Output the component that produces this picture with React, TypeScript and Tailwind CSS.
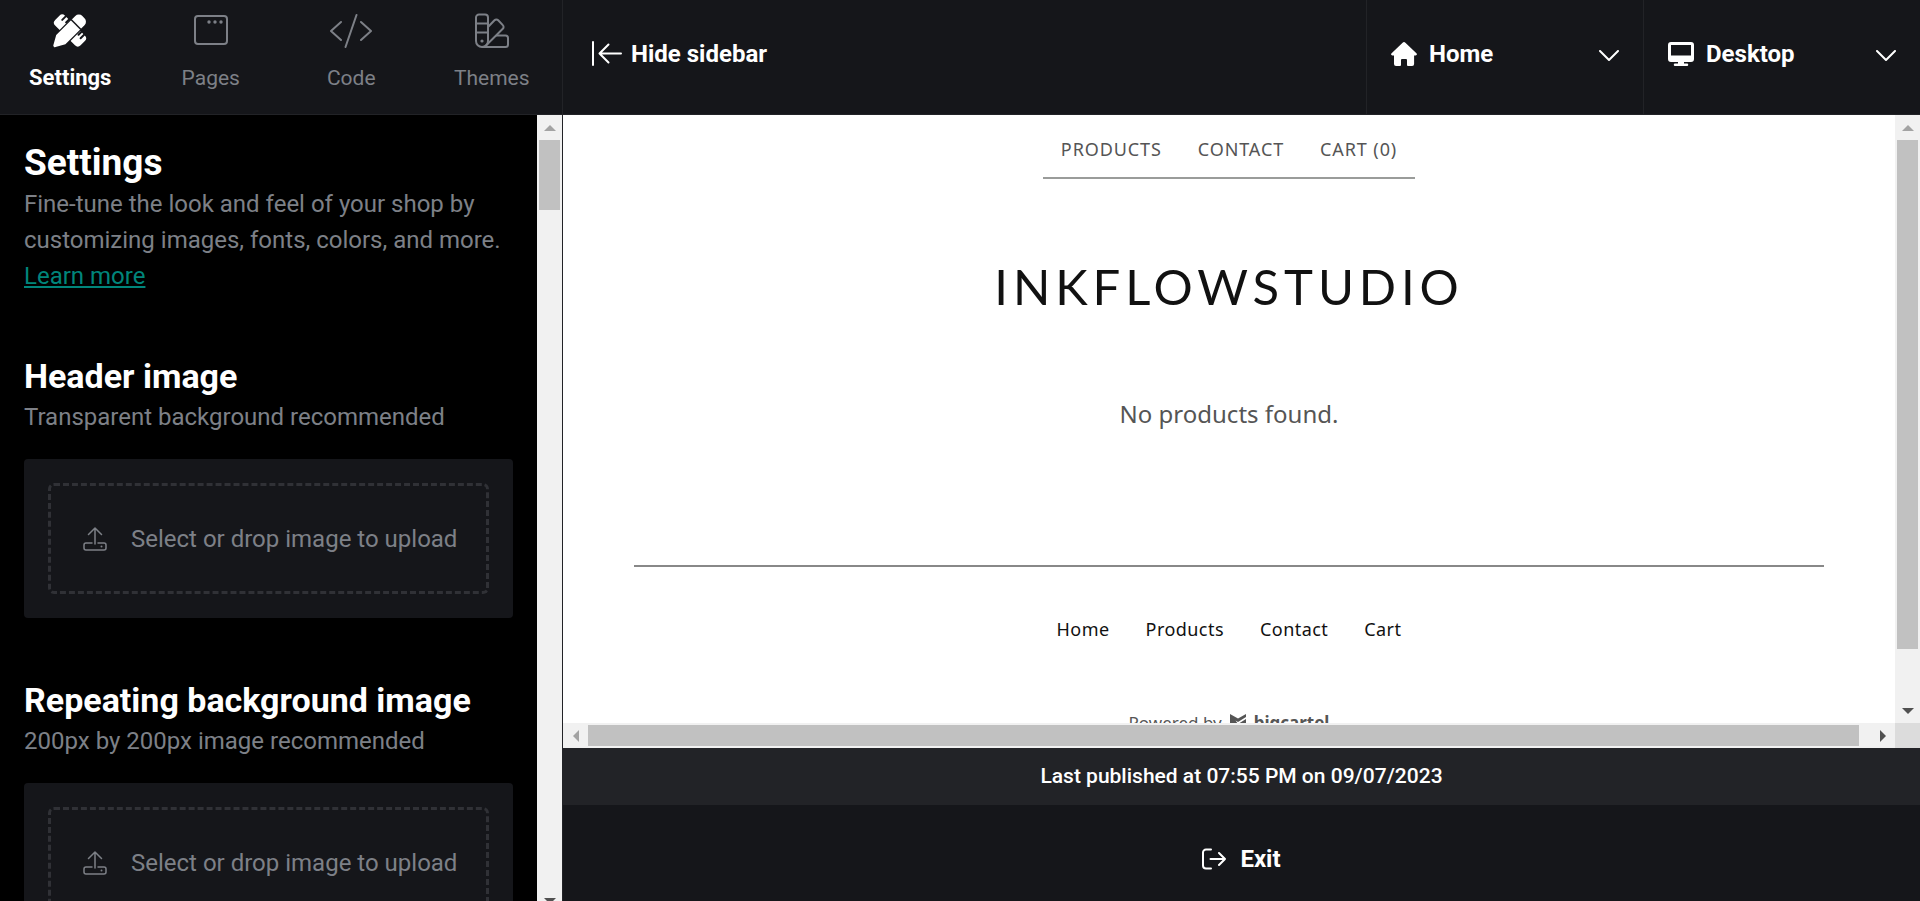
import type { ReactNode } from "react";

const tabs: { name: string; icon: ReactNode }[] = [
  {
    name: "Settings",
    icon: (
      <svg viewBox="0 0 34 36" className="h-9 w-[34px]" fill="currentColor" aria-hidden="true">
        <g transform="translate(17 18.5) rotate(45)">
          <rect x="-18" y="-7" width="36" height="14" rx="4" />
          <path d="M-13 -8v6M-8.500 -8v5M9 -8v5M13 -8v6" stroke="#15161a" strokeWidth="2" strokeLinecap="round" />
        </g>
        <g transform="translate(17 18.500) rotate(-45)">
          <path d="M-22 -1.500-13 -6.500H14a5 5 0 0 1 5 5v3a5 5 0 0 1-5 5H-13l-9-5a1.700 1.700 0 0 1 0-3z" stroke="#15161a" strokeWidth="2.500" paintOrder="stroke" />
          <path d="M8.500 -7V7" stroke="#15161a" strokeWidth="1.500" />
        </g>
      </svg>
    ),
  },
  {
    name: "Pages",
    icon: (
      <svg viewBox="0 0 34 36" className="h-9 w-[34px]" fill="none" stroke="currentColor" strokeWidth="2" aria-hidden="true">
        <rect x="1" y="4" width="32" height="28" rx="3" />
        <g fill="currentColor" stroke="none">
          <circle cx="15" cy="10" r="1.700" />
          <circle cx="21" cy="10" r="1.700" />
          <circle cx="27" cy="10" r="1.700" />
        </g>
      </svg>
    ),
  },
  {
    name: "Code",
    icon: (
      <svg viewBox="0 0 42 36" className="h-9 w-[42px]" fill="none" stroke="currentColor" strokeWidth="2" strokeLinecap="round" strokeLinejoin="round" aria-hidden="true">
        <path d="M11 10 1 19l10 9M31 10l10 9-10 9M26.500 3l-11 32" />
      </svg>
    ),
  },
  {
    name: "Themes",
    icon: (
      <svg viewBox="0 0 34 36" className="h-9 w-[34px]" fill="none" stroke="currentColor" strokeWidth="2" strokeLinejoin="round" aria-hidden="true">
        <path d="M4 2.500h6a3 3 0 0 1 3 3V29a6 6 0 0 1-12 0V5.500a3 3 0 0 1 3-3zM1 11.500h12M1 20.500h12" />
        <path d="m13 15 6.500-6.800a2.600 2.600 0 0 1 3.700 0l4.600 4.900a2.600 2.600 0 0 1 0 3.700L11 33.500" />
        <path d="M7 35h23.500a2.500 2.500 0 0 0 2.500-2.500V26a2.500 2.500 0 0 0-2.500-2.500H21" />
        <circle cx="7" cy="29" r="1.600" fill="currentColor" stroke="none" />
      </svg>
    ),
  },
];

function Triangle({ d }: { d: string }) {
  return (
    <svg viewBox="0 0 12 12" className="size-3" fill="currentColor" aria-hidden="true">
      <path d={d} />
    </svg>
  );
}

const up = "M6 3 12 9H0z";
const down = "M0 3h12L6 9z";
const left = "M3 6 9 0v12z";
const right = "M3 0l6 6-6 6z";

function UploadIcon() {
  return (
    <svg viewBox="0 0 24 24" className="size-6 shrink-0" fill="none" stroke="currentColor" strokeWidth="1.500" strokeLinecap="round" strokeLinejoin="round" aria-hidden="true">
      <path d="M12 17V1M5.500 7.500 12 1l6.500 6.500M9 16H3a2 2 0 0 0-2 2v3a2 2 0 0 0 2 2h18a2 2 0 0 0 2-2v-3a2 2 0 0 0-2-2h-6" />
      <circle cx="18.500" cy="19.500" r="1" fill="currentColor" stroke="none" />
    </svg>
  );
}

function UploadSection({ title, hint }: { title: string; hint: string }) {
  return (
    <section className="mt-[62px]">
      <h2 className="text-[34px] leading-10 font-bold whitespace-nowrap">{title}</h2>
      <p className="mt-[3px] text-2xl leading-9 text-[#7d8087]">{hint}</p>
      <div className="mt-6 rounded bg-[#15161a] p-6 text-[#7d8087]">
        <button type="button" className="flex h-[111px] w-full items-center gap-6 rounded-md border-3 border-dashed border-[#303136] px-8">
          <UploadIcon />
          <span className="text-2xl whitespace-nowrap">Select or drop image to upload</span>
        </button>
      </div>
    </section>
  );
}

function Picker({ label, icon, options }: { label: string; icon: ReactNode; options: string[] }) {
  return (
    <div className="flex w-[277px] items-center border-l border-[#222327] px-6 pb-1.5">
      {icon}
      <select aria-label={label} className="ml-3 w-0 flex-1 appearance-none bg-transparent text-2xl font-bold">
        {options.map((o) => (
          <option key={o}>{o}</option>
        ))}
      </select>
      <svg viewBox="0 0 20 12" className="pointer-events-none mt-1 h-3 w-5" fill="none" stroke="currentColor" strokeWidth="2" strokeLinecap="round" strokeLinejoin="round" aria-hidden="true">
        <path d="m1 1 9 9 9-9" />
      </svg>
    </div>
  );
}

export default function App() {
  return (
    <div className="h-screen overflow-hidden bg-black font-['Roboto',sans-serif] text-white">
      <div className="flex h-[calc(100vh+12px)]">
        <aside className="flex w-[563px] shrink-0 flex-col border-r border-[#222327]">
          <nav className="grid h-[115px] shrink-0 grid-cols-4 border-b border-[#222327] bg-[#15161a]">
            {tabs.map((t, i) => (
              <button key={t.name} type="button" className={`flex flex-col items-center pt-3 leading-7 ${i === 0 ? "text-[22px] font-bold text-white" : "text-[21px] text-[#7d8087]"}`}>
                {t.icon}
                <span className="mt-4">{t.name}</span>
              </button>
            ))}
          </nav>
          <div className="flex min-h-0 flex-1">
            <div className="flex-1 overflow-hidden px-6 pt-7">
              <h1 className="text-[37px] leading-10 font-bold">Settings</h1>
              <p className="mt-[3px] text-2xl leading-9 text-[#7d8087]">
                Fine-tune the look and feel of your shop by
                <br />
                customizing images, fonts, colors, and more.
                <br />
                <a href="#learn" className="text-[#00857b] underline decoration-2 underline-offset-2">Learn more</a>
              </p>
              <UploadSection title="Header image" hint="Transparent background recommended" />
              <UploadSection title="Repeating background image" hint="200px by 200px image recommended" />
            </div>
            <div className="flex w-[25px] flex-col items-center bg-[#f1f1f1]">
              <div className="flex h-[25px] items-center text-[#a3a3a3]"><Triangle d={up} /></div>
              <div className="h-[70px] w-[21px] bg-[#c1c1c1]" />
              <div className="mt-auto flex h-[25px] items-center text-[#505050]"><Triangle d={down} /></div>
            </div>
          </div>
        </aside>

        <main className="flex min-w-0 flex-1 flex-col">
          <header className="flex h-[115px] shrink-0 border-b border-[#222327] bg-[#15161a]">
            <button type="button" className="flex items-center gap-2 pb-1.5 pl-7 text-2xl font-bold">
              <svg viewBox="0 0 32 26" className="h-[26px] w-8" fill="none" stroke="currentColor" strokeWidth="2" strokeLinecap="round" strokeLinejoin="round" aria-hidden="true">
                <path d="M2 1v23M8.500 12.500H30M17.500 3.500l-9 9 9 9" />
              </svg>
              Hide sidebar
            </button>
            <div className="ml-auto flex">
              <Picker
                label="Page"
                options={["Home", "Products", "Contact", "Cart"]}
                icon={
                  <svg viewBox="0 0 26 24" className="h-6 w-[26px]" fill="currentColor" aria-hidden="true">
                    <path d="M11.600.7a2 2 0 0 1 2.800 0l11 10.500c1 1 .4 2.300-.8 2.300h-1.500V22a2 2 0 0 1-2 2H17a1 1 0 0 1-1-1v-5a1 1 0 0 0-1-1h-4a1 1 0 0 0-1 1v5a1 1 0 0 1-1 1H5a2 2 0 0 1-2-2v-8.500H1.400c-1.200 0-1.800-1.300-.8-2.300z" />
                  </svg>
                }
              />
              <Picker
                label="Device"
                options={["Desktop", "Mobile"]}
                icon={
                  <svg viewBox="0 0 26 24" className="h-6 w-[26px]" fill="currentColor" aria-hidden="true">
                    <path fillRule="evenodd" d="M3 0h20a3 3 0 0 1 3 3v14a3 3 0 0 1-3 3h-7v1.500h3a1.200 1.200 0 0 1 0 2.500H7a1.200 1.200 0 0 1 0-2.500h3V20H3a3 3 0 0 1-3-3V3a3 3 0 0 1 3-3zm0 3v10.500h20V3z" />
                  </svg>
                }
              />
            </div>
          </header>

          <div className="flex min-h-0 flex-1 bg-white">
            <div className="flex min-w-0 flex-1 flex-col items-center overflow-hidden font-['Noto_Sans',sans-serif]">
              <nav className="flex border-b-2 border-[#9a9c9a] px-[18px] text-lg leading-6 tracking-wider text-[#555]">
                <a href="#products" className="mr-9 pt-[22px] pb-4">PRODUCTS</a>
                <a href="#contact" className="mr-9 pt-[22px] pb-4">CONTACT</a>
                <a href="#cart" className="pt-[22px] pb-4">CART (0)</a>
              </nav>
              <h2 className="mt-[75px] font-['Lato',sans-serif] text-[49px] leading-[64px] tracking-widest whitespace-nowrap text-[#111]">INKFLOWSTUDIO</h2>
              <p className="mt-[78px] text-2xl leading-9 text-[#555]">No products found.</p>
              <div className="mt-[133px] w-full px-[71px]">
                <hr className="border-t-2 border-[#888]" />
              </div>
              <nav className="mt-12 flex gap-9 text-lg leading-7 tracking-wide text-[#111]">
                <a href="#home">Home</a>
                <a href="#products">Products</a>
                <a href="#contact">Contact</a>
                <a href="#cart">Cart</a>
              </nav>
              <a href="#bigcartel" className="mt-[66px] flex shrink-0 items-center gap-2 text-[17px] leading-7 text-[#555]">
                Powered by
                <svg viewBox="0 0 16 18" className="h-[18px] w-4" fill="currentColor" aria-hidden="true">
                  <path d="M0 0l8 4.500L16 0v3L8 8 5.500 6.500 8 10l8-5v7l-8 6-8-6z" />
                </svg>
                <span className="font-bold">bigcartel</span>
              </a>
            </div>
            <div className="flex w-[25px] shrink-0 flex-col items-center bg-[#f1f1f1]">
              <div className="flex h-[25px] items-center text-[#a3a3a3]"><Triangle d={up} /></div>
              <div className="h-[509px] w-[21px] bg-[#c1c1c1]" />
              <div className="mt-auto flex h-[25px] items-center text-[#505050]"><Triangle d={down} /></div>
            </div>
          </div>

          <div className="flex h-[25px] shrink-0 items-center bg-[#f1f1f1]">
            <div className="flex w-[25px] justify-center text-[#a3a3a3]"><Triangle d={left} /></div>
            <div className="mr-[11px] h-[21px] flex-1 bg-[#c1c1c1]" />
            <div className="flex w-[25px] justify-center text-[#505050]"><Triangle d={right} /></div>
            <div className="h-full w-[25px] bg-[#dcdcdc]" />
          </div>
          <p className="flex h-[57px] shrink-0 items-center justify-center bg-[#222327] text-[21px] font-medium">
            Last published at 07:55 PM on 09/07/2023
          </p>
          <footer className="flex h-[108px] shrink-0 items-center justify-center bg-[#15161a]">
            <button type="button" className="flex items-center gap-3.5 text-2xl font-bold">
              <svg viewBox="0 0 24 22" className="h-[22px] w-6" fill="none" stroke="currentColor" strokeWidth="2" strokeLinecap="round" strokeLinejoin="round" aria-hidden="true">
                <path d="M9 1.500H4a3 3 0 0 0-3 3v13a3 3 0 0 0 3 3h5M8.500 11H23M17 5l6 6-6 6" />
              </svg>
              Exit
            </button>
          </footer>
        </main>
      </div>
    </div>
  );
}
